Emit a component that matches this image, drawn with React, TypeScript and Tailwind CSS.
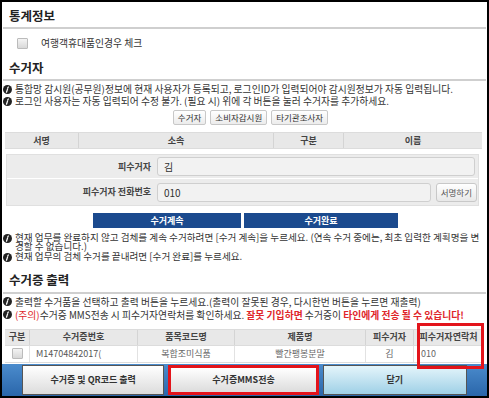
import React from "react";

const Info = () => (
  <svg width="9" height="9" viewBox="0 0 10 10" className="shrink-0 mt-[1.5px]">
    <circle cx="5" cy="5" r="5" fill="#222" />
    <path d="M5.9 2.2 L5.3 3.1 M5.1 4.3 L3.9 8" stroke="#fff" strokeWidth="1.4" strokeLinecap="round" />
  </svg>
);

const Title = ({ h, children }: { h: string; children: React.ReactNode }) => (
  <div className={h + " pl-[6px] flex items-end pb-[5px] border-b-2 border-[#cfcfcf] text-[12.5px] font-bold text-[#222] leading-none"}>
    {children}
  </div>
);

const Line = ({ children }: { children: React.ReactNode }) => (
  <div className="flex items-start gap-[3px] text-[9.8px] leading-[12px] text-[#333]">
    <Info />
    <div>{children}</div>
  </div>
);

const Box = () => (
  <span className="inline-block w-[11px] h-[11px] border border-[#bbb] rounded-[1px] bg-gradient-to-b from-[#f4f4f4] to-[#d8d8d8]" />
);

const cols = "grid grid-cols-[25px_108px_97px_131px_48px_1fr]";

export default function App() {
  return (
    <div
      className="w-[489px] h-[398px] border-2 border-black bg-white overflow-hidden flex flex-col"
      style={{ fontFamily: '"Noto Sans CJK KR", "Noto Sans", sans-serif' }}
    >
      <div className="flex-1 px-[1px]">
        <Title h="h-[27px]">통계정보</Title>
        <div className="h-[28px] flex items-center pl-[14px] gap-[13px] text-[9.8px] text-[#333]">
          <Box />
          <span>여행객휴대품인경우 체크</span>
        </div>
        <Title h="h-[24px]">수거자</Title>
        <div className="pt-[2px] flex flex-col">
          <Line>통합망 감시원(공무원)정보에 현재 사용자가 등록되고, 로그인ID가 입력되어야 감시원정보가 자동 입력됩니다.</Line>
          <Line>로그인 사용자는 자동 입력되어 수정 불가. (필요 시) 위에 각 버튼을 눌러 수거자를 추가하세요.</Line>
        </div>
        <div className="flex justify-center gap-[4px] mt-[3px] ml-[12px]">
          {["수거자", "소비자감시원", "타기관조사자"].map((b) => (
            <button
              key={b}
              className="h-[15px] px-[4px] text-[8.5px] leading-none text-[#333] border border-[#c8c8c8] rounded-[2px] bg-gradient-to-b from-white to-[#ececec]"
            >
              {b}
            </button>
          ))}
        </div>
        <div className="mt-[7px] ml-[2px] mr-[4px] h-[17px] grid grid-cols-[74px_195px_70px_1fr] bg-[#e8e8e8] border-y border-[#dcdcdc] text-[9px] font-bold text-[#444]">
          <div className="flex items-center justify-center border-r border-[#d4d4d4]">서명</div>
          <div className="flex items-center justify-center border-r border-[#d4d4d4]">소속</div>
          <div className="flex items-center justify-center border-r border-[#d4d4d4]">구분</div>
          <div className="flex items-center justify-center">이름</div>
        </div>
        <div className="mt-[5px] ml-[3px] mr-[7px] bg-[#ececec] border border-[#e0e0e0] text-[9px]">
          <div className="h-[24px] flex items-center border-b border-white">
            <div className="w-[150px] text-right pr-[6px] font-bold text-[#444]">피수거자</div>
            <div className="flex-1 mr-[3px] h-[19px] flex items-center px-[6px] bg-[#f2f2f2] border border-[#cfcfcf] rounded-[3px] text-[10px] text-[#333]">김</div>
          </div>
          <div className="h-[26px] flex items-center">
            <div className="w-[150px] text-right pr-[6px] font-bold text-[#444]">피수거자 전화번호</div>
            <div className="flex-1 h-[19px] flex items-center px-[6px] bg-[#f2f2f2] border border-[#cfcfcf] rounded-[3px] text-[10px] text-[#333]">010</div>
            <button className="ml-[5px] mr-[1px] h-[19px] px-[4px] text-[8.5px] text-[#555] border border-[#c8c8c8] rounded-[3px] bg-gradient-to-b from-white to-[#e8e8e8]">서명하기</button>
          </div>
        </div>
        <div className="mt-[7px] flex justify-center gap-[3px] ml-[2px]">
          <button className="w-[148px] h-[15px] bg-[#1b4a8e] text-white text-[9px] font-bold leading-none">수거계속</button>
          <button className="w-[154px] h-[15px] bg-[#1b4a8e] text-white text-[9px] font-bold leading-none">수거완료</button>
        </div>
        <div className="mt-[4px] flex flex-col gap-[1px]">
          <div className="flex items-start gap-[3px] text-[9.6px] leading-[8.5px] text-[#333]">
            <Info />
            <div className="pt-[1px] whitespace-nowrap">
              현재 업무를 완료하지 않고 검체를 계속 수거하려면 [수거 계속]을 누르세요. (연속 수거 중에는, 최초 입력한 계획명을 변
              <br />
              경할 수 없습니다.)
            </div>
          </div>
          <div className="flex items-start gap-[3px] text-[9.6px] leading-[10px] text-[#333]">
            <Info />
            <div>현재 업무의 검체 수거를 끝내려면 [수거 완료]를 누르세요.</div>
          </div>
        </div>
        <div className="mt-[8px]">
          <Title h="h-[24px]">수거증 출력</Title>
        </div>
        <div className="pt-[2px] flex flex-col gap-[1px]">
          <Line>출력할 수거품을 선택하고 출력 버튼을 누르세요.(출력이 잘못된 경우, 다시한번 버튼을 누르면 재출력)</Line>
          <Line>
            <span className="text-[#e0262a]">(주의)</span>수거증 MMS전송 시 피수거자연락처를 확인하세요.{" "}
            <span className="text-[#e0262a] font-bold">잘못 기입하면</span> 수거증이{" "}
            <span className="text-[#e0262a] font-bold">타인에게 전송 될 수 있습니다!</span>
          </Line>
        </div>
        <div className="mt-[8px] ml-[2px] mr-[3px] relative text-[9px]">
          <div className={cols + " h-[17px] bg-[#e8e8e8] border-y border-[#dcdcdc] font-bold text-[#444]"}>
            {["구분", "수거증번호", "품목코드명", "제품명", "피수거자", "피수거자연락처"].map((h, i) => (
              <div key={h} className={"flex items-center justify-center " + (i < 5 ? "border-r border-[#d4d4d4]" : "")}>{h}</div>
            ))}
          </div>
          <div className={cols + " h-[17px] border-b border-[#dcdcdc] text-[#666]"}>
            <div className="flex items-center justify-center border-r border-[#e2e2e2]"><Box /></div>
            <div className="flex items-center pl-[6px] border-r border-[#e2e2e2] overflow-hidden whitespace-nowrap text-[#555]">M14704842017(</div>
            <div className="flex items-center justify-center border-r border-[#e2e2e2]">복합조미식품</div>
            <div className="flex items-center justify-center border-r border-[#e2e2e2]">빨간팽봉분말</div>
            <div className="flex items-center justify-center border-r border-[#e2e2e2]">김</div>
            <div className="flex items-center pl-[7px]">010</div>
          </div>
          <div className="absolute right-[-1px] top-[-6px] w-[67px] h-[46px] border-[3px] border-[#e3141b]" />
        </div>
      </div>
      <div className="h-[32px] flex items-stretch bg-gradient-to-b from-[#4b8ccd] to-[#2a66aa] px-[20px] gap-[4px] py-[1px]">
        <button className="w-[144px] bg-gradient-to-b from-white to-[#dcdcdc] border border-[#555] text-[9px] font-bold text-[#333]">수거증 및 QR코드 출력</button>
        <button className="w-[152px] bg-gradient-to-b from-white to-[#dcdcdc] border-[3px] border-[#e3141b] text-[9px] font-bold text-[#333]">수거증MMS전송</button>
        <button className="w-[146px] bg-gradient-to-b from-[#e4f5fb] to-[#9fd0e6] border border-[#555] text-[9px] font-bold text-[#333]">닫기</button>
      </div>
    </div>
  );
}
